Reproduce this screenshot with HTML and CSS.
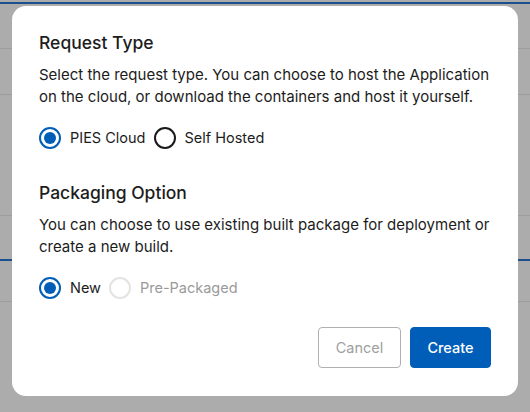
FILE: index.html
```html
<!DOCTYPE html>
<html>
<head>
<meta charset="utf-8">
<link rel="stylesheet" href="styles.css">
</head>
<body>
<div class="backdrop">
  <div class="bg-row r1"></div>
  <div class="bg-row r2"></div>
  <div class="bg-row r3"></div>
  <div class="bg-row r4"></div>
  <div class="bg-row r5"></div>
  <div class="bg-row r6"></div>
</div>
<div class="modal">
  <section class="group">
    <h2 class="title">Request Type</h2>
    <p class="desc">Select the request type. You can choose to host the Application on the cloud, or download the containers and host it yourself.</p>
    <div class="radios">
      <label class="radio"><span class="dot checked"></span><span>PIES Cloud</span></label>
      <label class="radio"><span class="dot"></span><span>Self Hosted</span></label>
    </div>
  </section>
  <section class="group second">
    <h2 class="title">Packaging Option</h2>
    <p class="desc">You can choose to use existing built package for deployment or create a new build.</p>
    <div class="radios">
      <label class="radio"><span class="dot checked"></span><span>New</span></label>
      <label class="radio disabled"><span class="dot"></span><span>Pre-Packaged</span></label>
    </div>
  </section>
  <div class="actions">
    <button class="btn cancel">Cancel</button>
    <button class="btn primary">Create</button>
  </div>
</div>
</body>
</html>
```
FILE: styles.css
```css
html, body {
  margin: 0;
  padding: 0;
}
body {
  width: 530px;
  height: 412px;
  background: #acacac;
  font-family: Inter, "Noto Sans", sans-serif;
  position: relative;
  overflow: hidden;
}
.backdrop {
  display: flex;
  flex-direction: column;
}
.bg-row {
  flex: none;
}
.r1 { height: 2px; border-bottom: 2px solid #1d4f8f; }
.r2 { height: 44px; border-bottom: 1px solid #9c9c9c; }
.r3 { height: 45px; border-bottom: 1px solid #9c9c9c; }
.r4 { height: 120px; border-bottom: 1px solid #9c9c9c; }
.r5 { height: 43px; border-bottom: 2px solid #1d4f8f; }
.r6 { height: 40px; border-bottom: 1px solid #9c9c9c; }

.modal {
  position: absolute;
  left: 12px;
  top: 6px;
  width: 506px;
  height: 390px;
  box-sizing: border-box;
  background: #fff;
  border-radius: 14px;
  padding: 25px 27px 0 27px;
  display: flex;
  flex-direction: column;
}
.title {
  margin: 0;
  font-size: 17.5px;
  font-weight: 500;
  color: #1c1c1c;
  line-height: 24px;
}
.desc {
  margin: 9px 0 0 0;
  font-size: 15px;
  line-height: 22px;
  color: #1c1c1c;
}
.radios {
  display: flex;
  gap: 8px;
  margin-top: 19px;
}
.radio {
  display: flex;
  align-items: center;
  gap: 9px;
  font-size: 14.5px;
  color: #1c1c1c;
  line-height: 22px;
}
.dot {
  width: 22px;
  height: 22px;
  box-sizing: border-box;
  border-radius: 50%;
  border: 2px solid #1a1a1a;
  display: flex;
  align-items: center;
  justify-content: center;
}
.dot.checked {
  border-color: #005eb8;
}
.dot.checked::after {
  content: "";
  width: 12px;
  height: 12px;
  border-radius: 50%;
  background: #005eb8;
}
.radio.disabled {
  color: #9a9a9a;
}
.radio.disabled .dot {
  border-color: #e3e3e3;
}
.second {
  margin-top: 32px;
}
.actions {
  display: flex;
  justify-content: flex-end;
  gap: 9px;
  margin-top: 28px;
}
.btn {
  font-family: Inter, "Noto Sans", sans-serif;
  font-size: 14.5px;
  height: 41px;
  border-radius: 4px;
  padding: 0 10px;
  box-sizing: border-box;
}
.cancel {
  background: #fff;
  border: 1px solid #b0b0b0;
  color: #a0a0a0;
  width: 83px;
}
.primary {
  background: #005eb8;
  border: 1px solid #005eb8;
  color: #fff;
  font-weight: 500;
  width: 81px;
}
```
